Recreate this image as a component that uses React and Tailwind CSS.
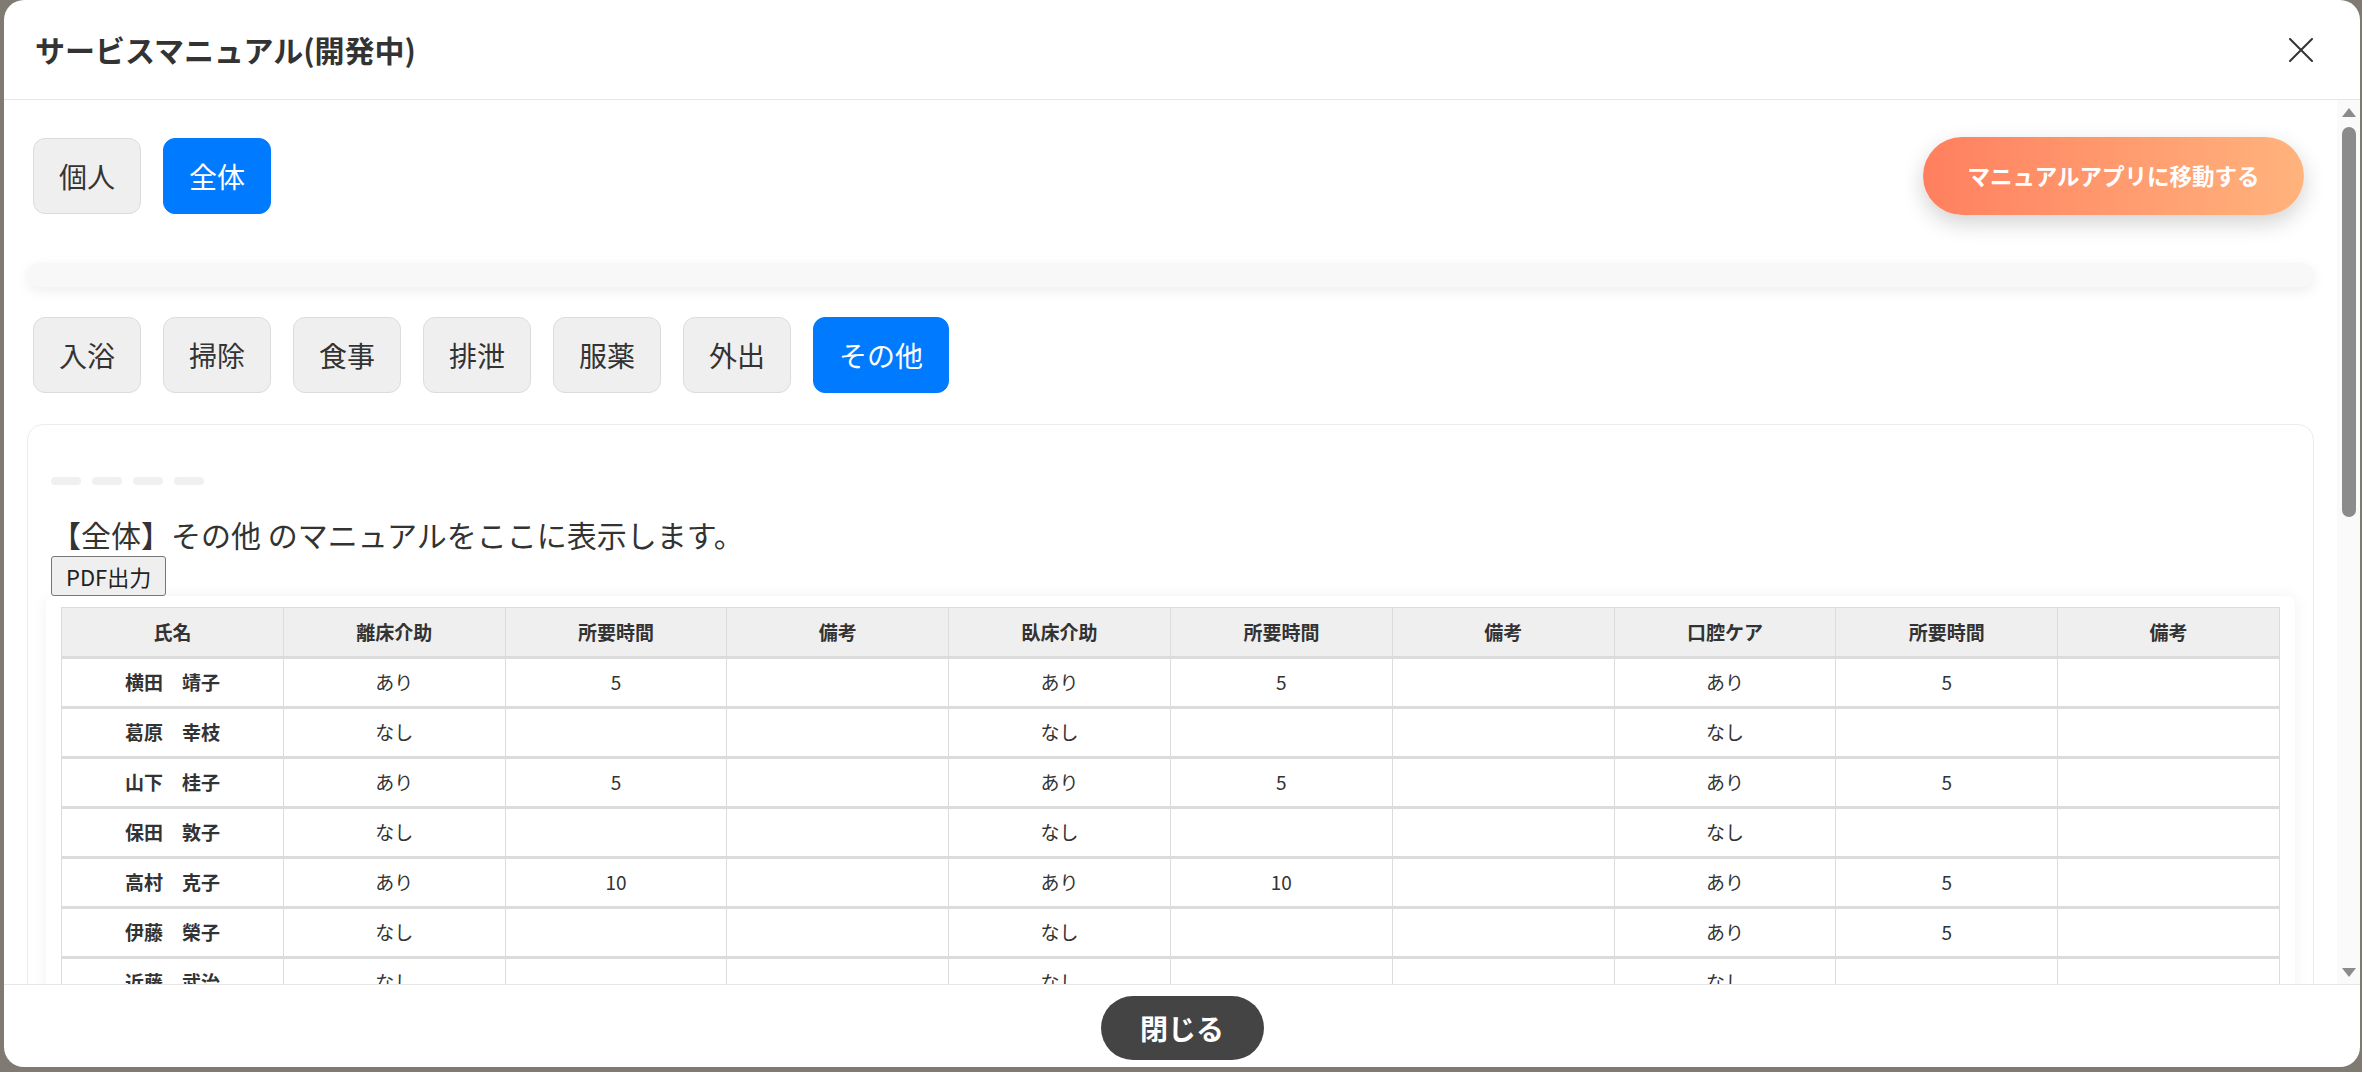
import { useState } from "react";

const font = { fontFamily: '"Noto Sans CJK JP", "Noto Sans", sans-serif' };

const cols = ["氏名", "離床介助", "所要時間", "備考", "臥床介助", "所要時間", "備考", "口腔ケア", "所要時間", "備考"];

const rows = [
  ["横田　靖子", "あり", "5", "", "あり", "5", "", "あり", "5", ""],
  ["葛原　幸枝", "なし", "", "", "なし", "", "", "なし", "", ""],
  ["山下　桂子", "あり", "5", "", "あり", "5", "", "あり", "5", ""],
  ["保田　敦子", "なし", "", "", "なし", "", "", "なし", "", ""],
  ["高村　克子", "あり", "10", "", "あり", "10", "", "あり", "5", ""],
  ["伊藤　榮子", "なし", "", "", "なし", "", "", "あり", "5", ""],
  ["近藤　武治", "なし", "", "", "なし", "", "", "なし", "", ""],
  ["佐藤　和子", "あり", "5", "", "あり", "5", "", "あり", "5", ""],
  ["田中　正夫", "なし", "", "", "なし", "", "", "なし", "", ""],
  ["鈴木　芳江", "あり", "10", "", "あり", "10", "", "あり", "5", ""],
  ["高橋　節子", "なし", "", "", "なし", "", "", "あり", "5", ""],
  ["渡辺　昭", "あり", "5", "", "あり", "5", "", "なし", "", ""],
  ["小林　幸子", "なし", "", "", "なし", "", "", "なし", "", ""],
  ["加藤　清", "あり", "5", "", "あり", "5", "", "あり", "5", ""],
  ["吉田　文子", "なし", "", "", "なし", "", "", "なし", "", ""],
  ["山口　トミ", "あり", "10", "", "あり", "10", "", "あり", "5", ""],
  ["松本　和夫", "なし", "", "", "なし", "", "", "なし", "", ""],
  ["井上　静江", "あり", "5", "", "あり", "5", "", "あり", "5", ""],
  ["木村　光子", "なし", "", "", "なし", "", "", "なし", "", ""],
  ["林　　久子", "あり", "5", "", "あり", "5", "", "あり", "5", ""],
  ["清水　勝", "なし", "", "", "なし", "", "", "なし", "", ""],
  ["山崎　千代", "あり", "5", "", "あり", "5", "", "あり", "5", ""],
  ["森　　弘子", "なし", "", "", "なし", "", "", "なし", "", ""],
  ["池田　茂", "あり", "10", "", "あり", "10", "", "あり", "5", ""],
];

const categories = ["入浴", "掃除", "食事", "排泄", "服薬", "外出", "その他"];

function Pill({ active, children, onClick }) {
  return (
    <button
      onClick={onClick}
      className={
        active
          ? "h-[76px] px-[25px] rounded-[12px] border border-[#007bff] bg-[#007bff] text-white text-[28px] leading-[42px]"
          : "h-[76px] px-[25px] rounded-[12px] border border-[#dcdcdc] bg-[#efefef] text-[#333] text-[28px] leading-[42px]"
      }
    >
      {children}
    </button>
  );
}

export default function App() {
  const [scope, setScope] = useState("全体");
  const [cat, setCat] = useState("その他");

  return (
    <div style={font} className="w-screen h-screen overflow-hidden bg-[#7f7a72] pl-[4px] pr-[2px]">
      <div className="flex flex-col h-[1067px] bg-white rounded-[20px] overflow-hidden">
        {/* Header */}
        <div className="flex items-center justify-between h-[100px] shrink-0 border-b border-[#e6e6e6] pl-[31px] pr-[47px]">
          <h1 className="text-[30px] font-bold text-[#333]">サービスマニュアル(開発中)</h1>
          <svg width="24" height="24" viewBox="0 0 24 24" fill="none" stroke="#333" strokeWidth="2" strokeLinecap="round">
            <path d="M1 1L23 23M23 1L1 23" />
          </svg>
        </div>

        {/* Body */}
        <div className="flex flex-1 min-h-0">
          <div className="flex-1 overflow-y-scroll [scrollbar-width:none] pl-[23px] pr-[23px] pt-[37px] pb-[40px]">
            <div className="flex items-center justify-between pl-[6px] pr-[10px]">
              <div className="flex gap-[22px]">
                {["個人", "全体"].map((s) => (
                  <Pill key={s} active={scope === s} onClick={() => setScope(s)}>
                    {s}
                  </Pill>
                ))}
              </div>
              <button className="w-[381px] h-[78px] rounded-full bg-gradient-to-r from-[#ff7f5f] to-[#ffb37d] text-white text-[22.5px] font-bold shadow-[0_8px_22px_rgba(0,0,0,0.18)]">
                マニュアルアプリに移動する
              </button>
            </div>

            <div className="mt-[48px] h-[24px] rounded-[12px] bg-[#f8f8f8] shadow-[0_4px_14px_rgba(0,0,0,0.07)]" />

            <div className="flex gap-[22px] mt-[30px] pl-[6px]">
              {categories.map((c) => (
                <Pill key={c} active={cat === c} onClick={() => setCat(c)}>
                  {c}
                </Pill>
              ))}
            </div>

            <div className="mt-[31px] rounded-[16px] border border-[#ececec] bg-white px-[18px] pt-[52px] pb-[24px]">
              <div className="pl-[5px]">
                <div className="flex gap-[11px]">
                  <div className="w-[30px] h-[8px] rounded-full bg-[#f0f0f0]" />
                  <div className="w-[30px] h-[8px] rounded-full bg-[#f0f0f0]" />
                  <div className="w-[30px] h-[8px] rounded-full bg-[#f0f0f0]" />
                  <div className="w-[30px] h-[8px] rounded-full bg-[#f0f0f0]" />
                </div>
                <p className="mt-[28px] text-[30px] leading-[43px] text-[#333]">【全体】{cat} のマニュアルをここに表示します。</p>
                <button className="h-[40px] px-[14px] rounded-[3px] border border-[#767676] bg-[#efefef] text-[22px] leading-[30px] text-[#222]">
                  PDF出力
                </button>
              </div>

              <div className="px-[15px] pt-[11px] pb-[15px] rounded-[8px] shadow-[0_0_16px_rgba(0,0,0,0.06)]">
                <table className="w-full table-fixed border-collapse text-[19px] text-[#333]">
                  <thead>
                    <tr className="bg-[#efefef]">
                      {cols.map((c, i) => (
                        <th key={i} className="h-[50px] border border-[#dcdcdc] border-b-[3px] font-bold">
                          {c}
                        </th>
                      ))}
                    </tr>
                  </thead>
                  <tbody>
                    {rows.map((r, ri) => (
                      <tr key={ri}>
                        {r.map((v, ci) => (
                          <td
                            key={ci}
                            className={
                              ci === 0
                                ? "h-[50px] border-x border-[#dcdcdc] border-b-[3px] text-center font-semibold"
                                : "h-[50px] border-x border-[#dcdcdc] border-b-[3px] text-center"
                            }
                          >
                            {v}
                          </td>
                        ))}
                      </tr>
                    ))}
                  </tbody>
                </table>
              </div>
            </div>
          </div>

          {/* Scrollbar */}
          <div className="w-[23px] shrink-0 bg-[#fafafa] flex flex-col items-center pt-[8px] pb-[7px]">
            <div className="w-0 h-0 border-x-[7px] border-x-transparent border-b-[9px] border-b-[#8b8b8b]" />
            <div className="mt-[10px] w-[14px] h-[390px] rounded-full bg-[#8b8b8b]" />
            <div className="flex-1" />
            <div className="w-0 h-0 border-x-[7px] border-x-transparent border-t-[9px] border-t-[#8b8b8b]" />
          </div>
        </div>

        {/* Footer */}
        <div className="shrink-0 h-[83px] border-t border-[#e6e6e6] flex justify-center pt-[11px]">
          <button className="w-[163px] h-[64px] rounded-full bg-[#444] text-white text-[28px] font-bold">閉じる</button>
        </div>
      </div>
    </div>
  );
}
